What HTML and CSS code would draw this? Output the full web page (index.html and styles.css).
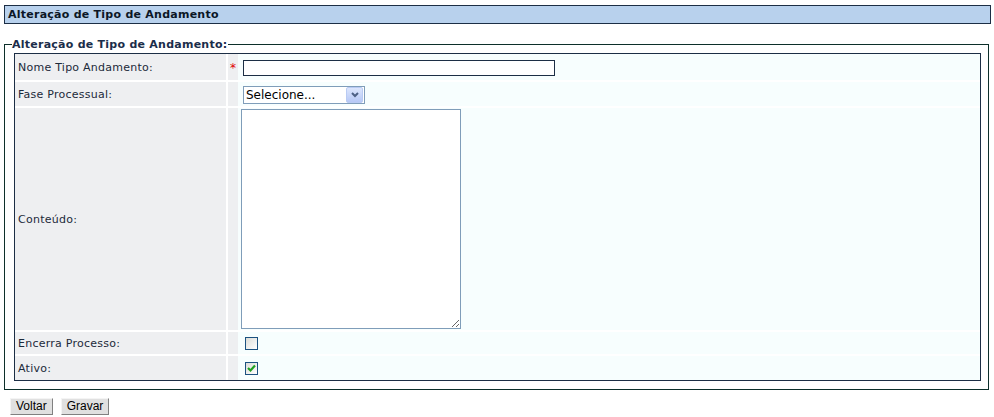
FILE: index.html
```html
<!DOCTYPE html>
<html lang="pt-BR">
<head>
    <meta charset="UTF-8">
    <title>Alteração de Tipo de Andamento</title>
    <link rel="stylesheet" href="styles.css">
</head>
<body>

    <div class="titulo">Alteração de Tipo de Andamento</div>

    <fieldset class="quadro">
        <legend>Alteração de Tipo de Andamento:</legend>

        <table class="form-tabela">
            <tr class="linha-nome">
                <td class="rotulo">Nome Tipo Andamento:</td>
                <td class="obrig"><span class="asterisco">*</span></td>
                <td class="campo"><input type="text" class="txt-nome"></td>
            </tr>
            <tr class="linha-fase">
                <td class="rotulo">Fase Processual:</td>
                <td class="obrig"></td>
                <td class="campo">
                    <span class="combo">
                        <select>
                            <option>Selecione...</option>
                        </select>
                        <span class="combo-botao">
                            <svg width="8" height="6" viewBox="0 0 8 6">
                                <path d="M1 1 L4 4 L7 1" fill="none" stroke="#4d6185" stroke-width="2"/>
                            </svg>
                        </span>
                    </span>
                </td>
            </tr>
            <tr class="linha-conteudo">
                <td class="rotulo">Conteúdo:</td>
                <td class="obrig"></td>
                <td class="campo"><textarea class="txt-conteudo"></textarea></td>
            </tr>
            <tr class="linha-check">
                <td class="rotulo">Encerra Processo:</td>
                <td class="obrig"></td>
                <td class="campo"><span class="caixa"></span></td>
            </tr>
            <tr class="linha-check ultima">
                <td class="rotulo">Ativo:</td>
                <td class="obrig"></td>
                <td class="campo">
                    <span class="caixa">
                        <svg width="11" height="11" viewBox="0 0 11 11">
                            <path d="M2 5 L4.5 7.5 L9 2.5" fill="none" stroke="#21a121" stroke-width="2.2"/>
                        </svg>
                    </span>
                </td>
            </tr>
        </table>
    </fieldset>

    <div class="botoes">
        <button class="botao">Voltar</button>
        <button class="botao">Gravar</button>
    </div>

</body>
</html>
```

FILE: styles.css
```css
body {
    margin: 5px 3px 0 4px;
    font-family: "DejaVu Sans", Verdana, sans-serif;
    font-size: 11px;
    letter-spacing: 0.25px;
    color: #1c2a3a;
    background: #fff;
}

/* barra de titulo */
.titulo {
    height: 17px;
    line-height: 17px;
    padding-left: 3px;
    border: 1px solid #1c2e45;
    background-color: #b8d1ed;
    font-weight: bold;
    color: #0b1626;
}

.quadro {
    margin: 14px 2px 0 0;
    padding: 2px 7px 8px 9px;
    border: 1px solid #0c2f2a;
}

.quadro legend {
    margin-left: -2px;
    padding: 0 1px 0 0;
    font-weight: bold;
    color: #1b2d4a;
}

.form-tabela {
    width: 100%;
    border: 1px solid #1c2e45;
    border-collapse: separate;
    border-spacing: 0;
    background-color: #f7fefe;
}

.form-tabela td {
    padding: 0;
    border-bottom: 2px solid #fff;
    vertical-align: middle;
}

.form-tabela .ultima td {
    border-bottom: none;
}

.rotulo {
    width: 208px;
    padding-left: 3px !important;
    background-color: #eeeff1;
    border-right: 2px solid #fff;
}

.obrig {
    width: 10px;
    background-color: #eeeff1;
    text-align: center;
}

.asterisco {
    color: #e00000;
    font-size: 12px;
    position: relative;
    top: 1px;
}

.campo {
    padding-left: 3px !important;
}

.linha-nome td { height: 26px; }
.linha-fase td { height: 24px; }
.linha-conteudo td { height: 222px; }
.linha-check td { height: 22px; }
.linha-check.ultima td { height: 24px; }

.txt-nome {
    display: block;
    box-sizing: border-box;
    width: 312px;
    height: 16px;
    margin: 1px 0 0 2px;
    padding: 0 2px;
    border: 1px solid #1c2e45;
    font: inherit;
    background: #fff;
}

/* combo estilo XP */
.combo {
    display: inline-flex;
    align-items: center;
    box-sizing: border-box;
    width: 122px;
    height: 18px;
    margin: 1px 0 0 2px;
    border: 1px solid #7f9db9;
    background: #fff;
    vertical-align: middle;
}

.combo select {
    flex: 1;
    min-width: 0;
    height: 16px;
    padding: 0 0 0 2px;
    border: none;
    outline: none;
    appearance: none;
    background: transparent;
    font-family: "DejaVu Sans", Verdana, sans-serif;
    font-size: 12px;
    color: #000;
}

.combo-botao {
    display: flex;
    align-items: center;
    justify-content: center;
    width: 15px;
    height: 14px;
    margin-right: 1px;
    border: 1px solid #b9cbf3;
    border-radius: 2px;
    background: linear-gradient(to bottom, #dce6fd, #b6c8f6);
}

.txt-conteudo {
    display: block;
    box-sizing: border-box;
    width: 220px;
    height: 220px;
    margin: 0;
    border: 1px solid #7f9db9;
    background: #fff;
    font: inherit;
}

.caixa {
    display: flex;
    align-items: center;
    justify-content: center;
    box-sizing: border-box;
    width: 13px;
    height: 13px;
    margin-left: 4px;
    border: 1px solid #1c5180;
    background: linear-gradient(135deg, #dcdcd7, #fff);
}

.botoes {
    display: flex;
    gap: 8px;
    margin: 8px 0 0 6px;
}

.botao {
    height: 17px;
    padding: 0 5px;
    border: 1px solid;
    border-color: #f4f4f4 #808080 #808080 #f4f4f4;
    background-color: #e0e0e0;
    font-family: "Liberation Sans", Tahoma, sans-serif;
    font-size: 12px;
    letter-spacing: 0;
    line-height: 13px;
    color: #000;
}
```
